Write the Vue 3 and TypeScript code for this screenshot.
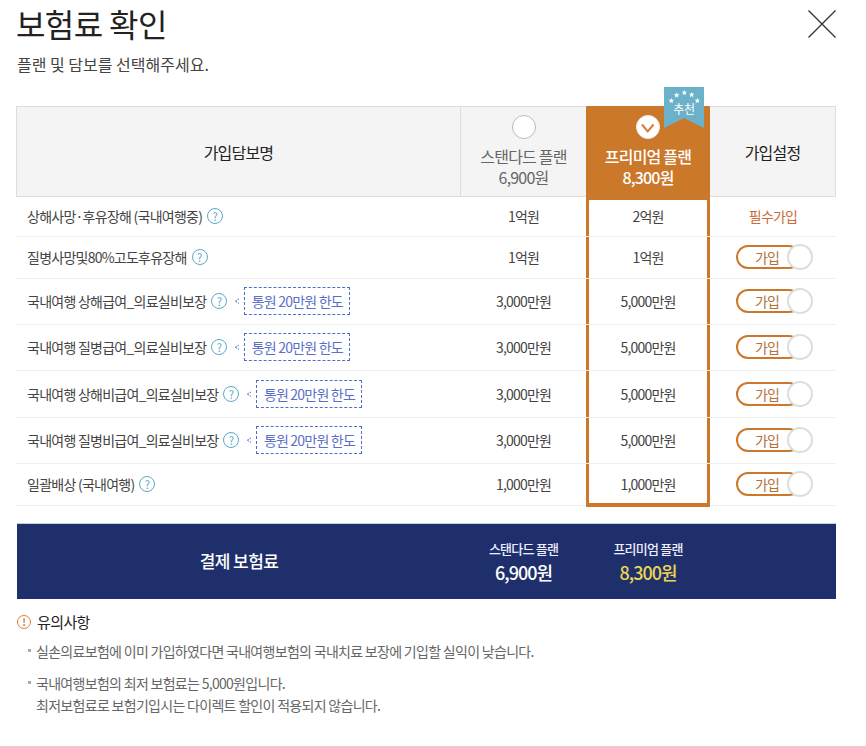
<script setup lang="ts">
interface Row { name: string; tag?: boolean; std: string; pre: string; req?: boolean; h: number }
const rows: Row[] = [
  { name: '상해사망·후유장해 (국내여행중)', std: '1억원', pre: '2억원', req: true, h: 40 },
  { name: '질병사망및80%고도후유장해', std: '1억원', pre: '1억원', h: 42 },
  { name: '국내여행 상해급여_의료실비보장', tag: true, std: '3,000만원', pre: '5,000만원', h: 46 },
  { name: '국내여행 질병급여_의료실비보장', tag: true, std: '3,000만원', pre: '5,000만원', h: 46 },
  { name: '국내여행 상해비급여_의료실비보장', tag: true, std: '3,000만원', pre: '5,000만원', h: 47 },
  { name: '국내여행 질병비급여_의료실비보장', tag: true, std: '3,000만원', pre: '5,000만원', h: 46 },
  { name: '일괄배상 (국내여행)', std: '1,000만원', pre: '1,000만원', h: 42 },
]
function star(cx: number, cy: number, r: number): string {
  const pts: string[] = []
  for (let i = 0; i < 10; i++) {
    const a = -Math.PI / 2 + (i * Math.PI) / 5
    const rad = i % 2 === 0 ? r : r * 0.42
    pts.push(`${(cx + rad * Math.cos(a)).toFixed(2)},${(cy + rad * Math.sin(a)).toFixed(2)}`)
  }
  return pts.join(' ')
}
const stars = [
  star(7.3, 13.7, 3),
  star(12.7, 8.3, 3),
  star(20.3, 5.7, 3),
  star(27.7, 7.7, 3),
  star(33.3, 13.7, 3),
]
</script>

<template>
  <div class="page">
    <header class="head">
      <h1 class="title">보험료 확인</h1>
      <svg class="close" width="30" height="30" viewBox="0 0 30 30">
        <path d="M1.5 1.5 L28.5 28.5 M28.5 1.5 L1.5 28.5" stroke="#333" stroke-width="1.3" fill="none" />
      </svg>
    </header>
    <p class="sub">플랜 및 담보를 선택해주세요.</p>

    <section class="table">
      <div class="thead">
        <div class="th th-name">가입담보명</div>
        <div class="th th-plan">
          <span class="radio"></span>
          <span class="plan-label">스탠다드 플랜</span>
          <span class="plan-label">6,900원</span>
        </div>
        <div class="th th-plan th-active">
          <span class="radio radio-on">
            <svg width="22" height="22" viewBox="0 0 22 22">
              <path d="M5 8.5 L10.7 15.5 L16.5 8.5" stroke="#d5803a" stroke-width="2" fill="none" />
            </svg>
          </span>
          <span class="plan-label">프리미엄 플랜</span>
          <span class="plan-label">8,300원</span>
          <div class="ribbon">
            <svg class="ribbon-bg" width="40" height="41" viewBox="0 0 40 41">
              <path d="M0 0 H40 V41 L20 31 L0 41 Z" fill="#6bb1ca" />
              <polygon v-for="(s, i) in stars" :key="i" :points="s" fill="#fff" />
            </svg>
            <span class="ribbon-text">추천</span>
          </div>
        </div>
        <div class="th th-set">가입설정</div>
      </div>

      <div
        v-for="(r, i) in rows"
        :key="i"
        class="row"
        :style="{ height: r.h + 'px' }"
      >
        <div class="cell cell-name">
          <span class="name-text">{{ r.name }}</span>
          <span class="help">?</span>
          <template v-if="r.tag">
            <svg class="tag-arrow" width="10" height="10" viewBox="0 0 10 10">
              <path d="M5 3 L1 5.2 L5 7.4" stroke="#4a6fcf" stroke-width="1" stroke-dasharray="1.6 1" fill="none" />
            </svg>
            <span class="tag">통원 20만원 한도</span>
          </template>
        </div>
        <div class="cell cell-val">{{ r.std }}</div>
        <div class="cell cell-val cell-pre" :class="{ 'cell-first': i === 0, 'cell-last': i === rows.length - 1 }">{{ r.pre }}</div>
        <div class="cell cell-val">
          <span v-if="r.req" class="req">필수가입</span>
          <span v-else class="toggle"><span class="toggle-text">가입</span><span class="knob"></span></span>
        </div>
      </div>
    </section>

    <section class="total">
      <div class="total-title">결제 보험료</div>
      <div class="total-col">
        <span class="total-name">스탠다드 플랜</span>
        <span class="total-price">6,900원</span>
      </div>
      <div class="total-col">
        <span class="total-name">프리미엄 플랜</span>
        <span class="total-price total-hi">8,300원</span>
      </div>
      <div></div>
    </section>

    <section class="notice">
      <h2 class="notice-title"><span class="warn">!</span>유의사항</h2>
      <ul class="notice-list">
        <li>실손의료보험에 이미 가입하였다면 국내여행보험의 국내치료 보장에 기입할 실익이 낮습니다.</li>
        <li>국내여행보험의 최저 보험료는 5,000원입니다.<br />최저보험료로 보험기입시는 다이렉트 할인이 적용되지 않습니다.</li>
      </ul>
    </section>
  </div>
</template>

<style scoped>
.page {
  width: 866px;
  height: 746px;
  box-sizing: border-box;
  padding: 0 30px 0 16px;
  overflow: hidden;
  font-family: "Noto Sans CJK KR", "Noto Sans", sans-serif;
  color: #333;
  letter-spacing: -0.8px;
}
.head {
  height: 52px;
  display: flex;
  justify-content: space-between;
  align-items: flex-start;
}
.title {
  margin: 0;
  font-size: 32px;
  line-height: 46px;
  font-weight: 400;
  color: #222;
  letter-spacing: -0.6px;
}
.close {
  margin: 9px -1px 0 0;
}
.sub {
  margin: 0;
  height: 54px;
  font-size: 16px;
  line-height: 24px;
  color: #444;
  padding-left: 1px;
  letter-spacing: 0;
}
.thead {
  display: grid;
  grid-template-columns: 445px 125px 124px 126px;
  height: 91px;
  box-sizing: border-box;
}
.th {
  background: #f4f4f4;
  border-top: 1px solid #ddd;
  border-bottom: 1px solid #ddd;
  font-size: 16px;
  color: #222;
  display: flex;
  align-items: center;
  justify-content: center;
}
.th-name {
  border-left: 1px solid #ddd;
  border-right: 1px solid #ddd;
}
.th-set {
  border-right: 1px solid #ddd;
}
.th-plan {
  position: relative;
  flex-direction: column;
  justify-content: flex-start;
  padding-top: 8px;
  color: #666;
}
.th-active {
  background: #cb782b;
  border-color: #cb782b;
  color: #fff;
  font-weight: 500;
}
.plan-label {
  line-height: 21px;
}
.radio {
  width: 22px;
  height: 22px;
  border-radius: 50%;
  background: #fff;
  border: 1px solid #bbb;
  margin-bottom: 7px;
}
.radio-on {
  border-color: #eee;
  display: flex;
  align-items: center;
  justify-content: center;
}
.ribbon {
  position: absolute;
  left: 78px;
  top: -20px;
  width: 40px;
  height: 41px;
}
.ribbon-bg {
  display: block;
}
.ribbon-text {
  position: absolute;
  left: 0;
  right: 0;
  top: 13px;
  text-align: center;
  font-size: 12px;
  line-height: 18px;
  font-weight: 400;
  color: #fff;
  letter-spacing: -0.3px;
}
.row {
  display: grid;
  grid-template-columns: 445px 125px 124px 126px;
  box-sizing: border-box;
}
.cell {
  border-bottom: 1px solid #eee;
  padding-bottom: 1px;
  font-size: 14px;
  display: flex;
  align-items: center;
  color: #444;
}
.cell-name {
  padding-left: 11px;
}
.name-text {
  letter-spacing: -0.75px;
}
.cell-val {
  justify-content: center;
}
.cell-pre {
  position: relative;
  box-shadow: inset 3px 0 #cb782b, inset -3px 0 #cb782b;
}
.cell-first {
  box-shadow: inset 3px 0 #cb782b, inset -3px 0 #cb782b, inset 0 3px #cb782b;
}
.cell-last::after {
  content: "";
  position: absolute;
  left: 0;
  right: 0;
  bottom: -2px;
  height: 4px;
  background: #cb782b;
}
.help {
  flex: none;
  width: 16px;
  height: 16px;
  margin-left: 5px;
  box-sizing: border-box;
  border: 1.2px solid #5ba9c4;
  border-radius: 50%;
  color: #5ba9c4;
  font-size: 11px;
  line-height: 14px;
  text-align: center;
  letter-spacing: 0;
}
.tag-arrow {
  flex: none;
  margin-left: 7px;
}
.tag {
  flex: none;
  width: 106px;
  height: 28px;
  box-sizing: border-box;
  border: 1px dashed #4a6fcf;
  font-size: 14px;
  line-height: 26px;
  text-align: center;
  color: #5a70c8;
}
.req {
  color: #cb6a3a;
  font-size: 14px;
}
.toggle {
  position: relative;
  width: 65px;
  height: 24px;
  margin-left: -9px;
  box-sizing: border-box;
  border: 2px solid #cb782b;
  border-radius: 12px;
  display: block;
}
.toggle-text {
  position: absolute;
  left: 17px;
  top: 0;
  line-height: 20px;
  font-size: 14px;
  color: #b5703a;
}
.knob {
  position: absolute;
  right: -14px;
  top: -3px;
  width: 26px;
  height: 26px;
  box-sizing: border-box;
  border: 2px solid #ddd;
  border-radius: 50%;
  background: #fff;
}
.total {
  margin: 17px 0 0 1px;
  height: 76px;
  background: #1f2f6b;
  border-top: 1px solid #c9cdd8;
  box-sizing: border-box;
  display: grid;
  grid-template-columns: 444px 125px 124px 126px;
  align-items: center;
  color: #fff;
}
.total-title {
  text-align: center;
  font-size: 17px;
  font-weight: 500;
  margin-top: -2px;
  letter-spacing: -0.6px;
}
.total-col {
  display: flex;
  flex-direction: column;
  align-items: center;
}
.total-name {
  font-size: 13px;
  line-height: 20px;
  font-weight: 500;
  color: #eef;
}
.total-price {
  font-size: 18px;
  line-height: 26px;
  font-weight: 500;
  letter-spacing: -1px;
}
.total-hi {
  color: #ecd552;
}
.notice {
  padding-left: 1px;
}
.notice-title {
  margin: 12px 0 0;
  font-size: 15px;
  line-height: 22px;
  font-weight: 400;
  color: #222;
  display: flex;
  align-items: center;
  letter-spacing: -0.6px;
}
.warn {
  width: 14px;
  height: 14px;
  box-sizing: border-box;
  border: 1.3px solid #d5803a;
  border-radius: 50%;
  color: #d5803a;
  font-size: 10px;
  line-height: 12px;
  text-align: center;
  font-weight: 700;
  margin-right: 6px;
  letter-spacing: 0;
}
.notice-list {
  list-style: none;
  margin: 7px 0 0;
  padding: 0 0 0 19px;
  font-size: 14px;
  line-height: 22px;
  color: #666;
  letter-spacing: -0.7px;
}
.notice-list li {
  position: relative;
  margin-bottom: 10px;
}
.notice-list li::before {
  content: "";
  position: absolute;
  left: -8px;
  top: 9px;
  width: 3px;
  height: 3px;
  background: #aaa;
}
</style>
